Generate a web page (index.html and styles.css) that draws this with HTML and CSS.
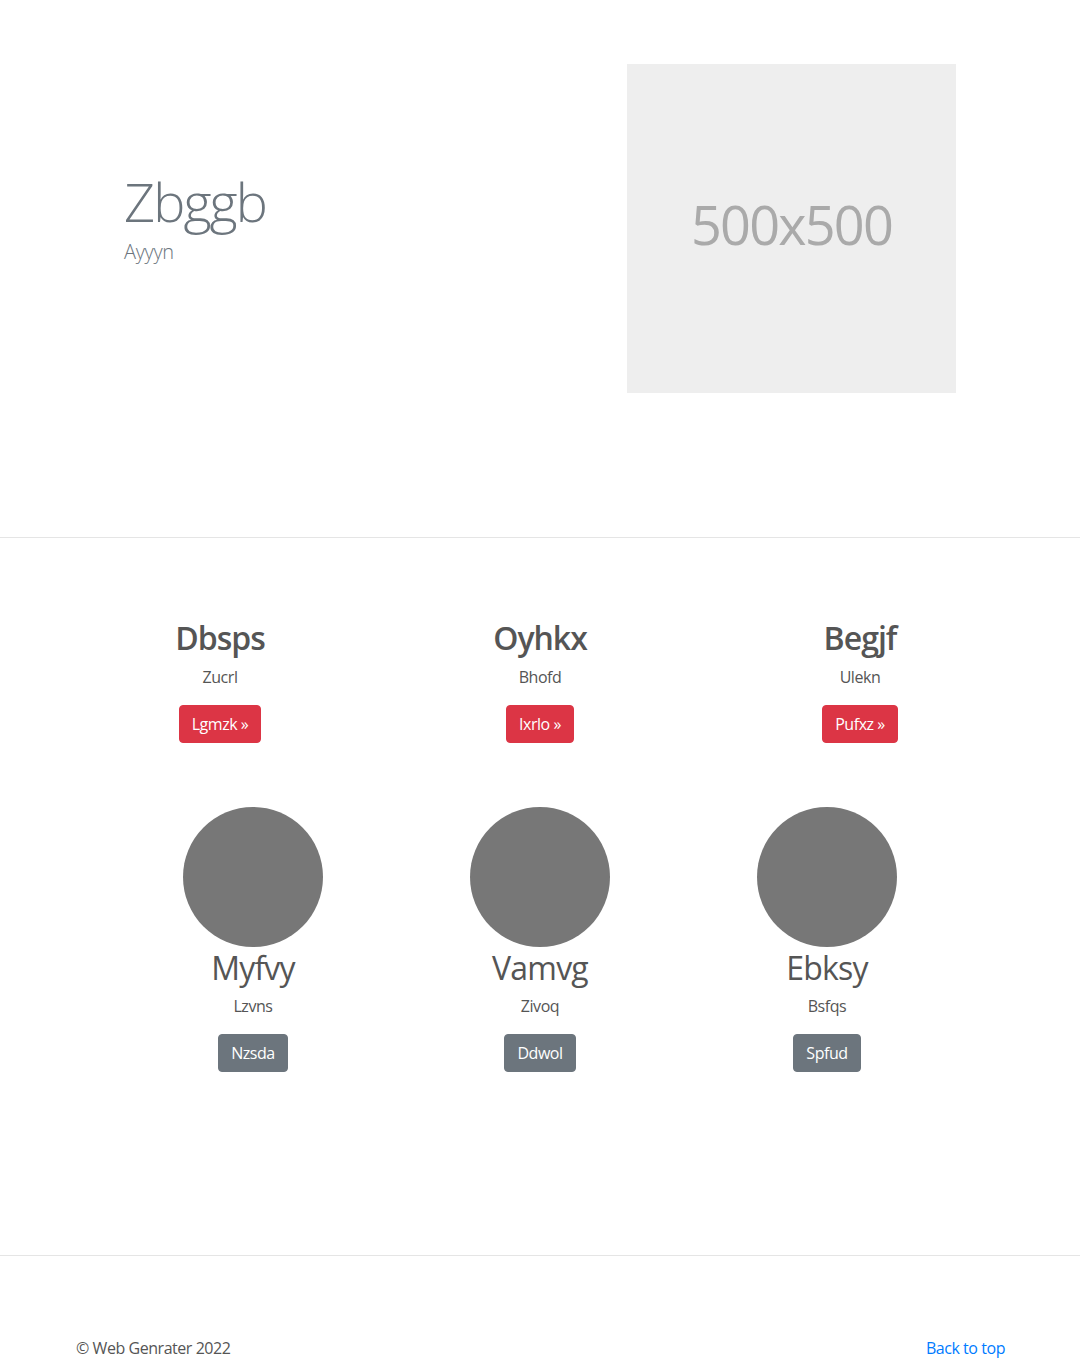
FILE: index.html
```html
<!DOCTYPE html>
<html lang="en">
<head>
<meta charset="utf-8">
<title>Zbggb</title>
<link rel="stylesheet" href="styles.css">
</head>
<body>
<section class="hero">
  <div class="container hero-row">
    <div class="hero-text">
      <h1 class="hero-title">Zbggb</h1>
      <p class="hero-lead">Ayyyn</p>
    </div>
    <div class="placeholder" role="img" aria-label="500x500"><span class="placeholder-text">500x500</span></div>
  </div>
</section>
<hr class="rule">
<section class="features">
  <div class="grid3 feat-row">
    <div class="feat">
      <h2 class="feat-title">Dbsps</h2>
      <p class="feat-text">Zucrl</p>
      <a class="btn btn-danger" href="#">Lgmzk &raquo;</a>
    </div>
    <div class="feat">
      <h2 class="feat-title">Oyhkx</h2>
      <p class="feat-text">Bhofd</p>
      <a class="btn btn-danger" href="#">Ixrlo &raquo;</a>
    </div>
    <div class="feat">
      <h2 class="feat-title">Begjf</h2>
      <p class="feat-text">Ulekn</p>
      <a class="btn btn-danger" href="#">Pufxz &raquo;</a>
    </div>
  </div>
  <div class="grid3 people-row">
    <div class="person">
      <div class="avatar"></div>
      <h2 class="person-name">Myfvy</h2>
      <p class="feat-text">Lzvns</p>
      <a class="btn btn-secondary" href="#">Nzsda</a>
    </div>
    <div class="person">
      <div class="avatar"></div>
      <h2 class="person-name">Vamvg</h2>
      <p class="feat-text">Zivoq</p>
      <a class="btn btn-secondary" href="#">Ddwol</a>
    </div>
    <div class="person">
      <div class="avatar"></div>
      <h2 class="person-name">Ebksy</h2>
      <p class="feat-text">Bsfqs</p>
      <a class="btn btn-secondary" href="#">Spfud</a>
    </div>
  </div>
</section>
<hr class="rule">
<footer class="footer">
  <div class="container footer-row">
    <p class="copy">&copy; Web Genrater 2022</p>
    <a class="back" href="#">Back to top</a>
  </div>
</footer>
</body>
</html>
```

FILE: styles.css
```css
* { box-sizing: border-box; }

body {
  margin: 0;
  font-family: "Open Sans", "Segoe UI", "Noto Sans", sans-serif;
  font-size: 16px;
  line-height: 1.5;
  letter-spacing: -0.45px;
  color: #555;
  background: #fff;
}

.container {
  width: 930px;
  margin: 0 auto;
}

.hero {
  padding: 64px 0 144px;
}

.hero-row {
  display: flex;
  align-items: center;
  justify-content: space-between;
  padding: 0 49px;
}

.hero-title {
  margin: 0;
  font-size: 54px;
  font-weight: 300;
  line-height: 64px;
  letter-spacing: -1.9px;
  color: #6c757d;
}

.hero-lead {
  margin: 4px 0 22px;
  font-size: 20px;
  font-weight: 300;
  line-height: 30px;
  letter-spacing: -0.3px;
  color: #6c757d;
}

.placeholder {
  width: 329px;
  height: 329px;
  background: #eeeeee;
  display: flex;
  align-items: center;
  justify-content: center;
  padding-bottom: 10px;
}

.placeholder-text {
  color: #aaaaaa;
  font-size: 54px;
  line-height: 54px;
  letter-spacing: -1.8px;
}

.rule {
  margin: 0;
  border: 0;
  border-top: 1px solid #e5e5e5;
  height: 0;
}

.features {
  padding: 81px 0 183px;
}

.grid3 {
  display: grid;
  margin: 0 auto;
  text-align: center;
}

.feat-row {
  grid-template-columns: repeat(3, 320px);
  width: 960px;
  margin-bottom: 64px;
}

.people-row {
  grid-template-columns: repeat(3, 287px);
  width: 861px;
}

.feat-title {
  margin: 0 0 8px;
  font-size: 32px;
  font-weight: 600;
  line-height: 38.4px;
  letter-spacing: -1px;
}

.person-name {
  margin: 0 0 6px;
  padding-top: 2px;
  font-size: 32px;
  font-weight: 400;
  line-height: 38.4px;
  letter-spacing: -0.8px;
}

.feat-text {
  margin: 0 0 16px;
}

.avatar {
  width: 140px;
  height: 140px;
  border-radius: 50%;
  background: #777777;
  margin: 0 auto;
}

.btn {
  display: inline-block;
  padding: 6px 12px;
  border: 1px solid transparent;
  border-radius: 4px;
  font-size: 16px;
  line-height: 24px;
  color: #fff;
  text-decoration: none;
}

.btn-danger {
  background: #dc3545;
  border-color: #dc3545;
}

.btn-secondary {
  background: #6c757d;
  border-color: #6c757d;
}

.footer {
  padding: 80px 0 48px;
}

.footer-row {
  display: flex;
  justify-content: space-between;
  align-items: flex-start;
}

.copy {
  margin: 0;
  padding-left: 1px;
}

.back {
  color: #007bff;
  text-decoration: none;
}
```
